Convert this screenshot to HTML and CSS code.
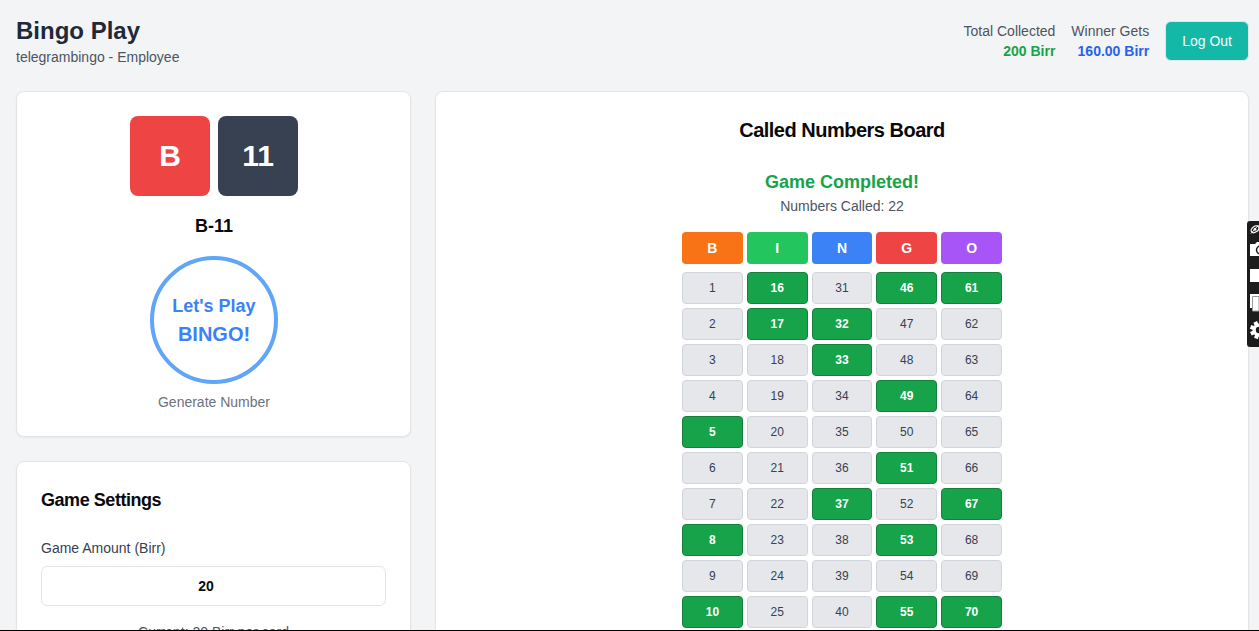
FILE: index.html
```
<!DOCTYPE html>
<html lang="en">
<head>
<meta charset="utf-8">
<title>Bingo Play</title>
<link rel="stylesheet" href="styles.css">
</head>
<body>
<div class="page">
  <header class="header">
    <div>
      <h1 class="title">Bingo Play</h1>
      <p class="subtitle">telegrambingo - Employee</p>
    </div>
    <div class="header-right">
      <div class="stat"><p>Total Collected</p><p class="stat-value green">200 Birr</p></div>
      <div class="stat"><p>Winner Gets</p><p class="stat-value blue">160.00 Birr</p></div>
      <button class="logout">Log Out</button>
    </div>
  </header>
  <main class="columns">
    <div class="left">
      <section class="card caller">
        <div class="tiles"><div class="tile letter">B</div><div class="tile number">11</div></div>
        <p class="current">B-11</p>
        <div class="circle"><span class="lets">Let's Play</span><span class="bingo">BINGO!</span></div>
        <p class="generate">Generate Number</p>
      </section>
      <section class="card settings">
        <h2 class="settings-title">Game Settings</h2>
        <label class="label">Game Amount (Birr)</label>
        <div class="amount">20</div>
        <p class="hint">Current: 20 Birr per card</p>
      </section>
    </div>
    <section class="card board-card">
      <h2 class="board-title">Called Numbers Board</h2>
      <p class="completed">Game Completed!</p>
      <p class="count">Numbers Called: 22</p>
      <div class="board heads">
        <div class="head b">B</div><div class="head i">I</div><div class="head n">N</div><div class="head g">G</div><div class="head o">O</div>
      </div>
      <div class="board" id="cells"></div>
    </section>
  </main>
</div>
<svg class="dock" width="12" height="126" viewBox="0 0 12 126">
  <path d="M3 0H12V126H3Q0 126 0 123V3Q0 0 3 0Z" fill="#1c1c1c"/>
  <ellipse cx="8" cy="8.300" rx="4.300" ry="2.800" transform="rotate(-35 8 8.300)" fill="none" stroke="#fff" stroke-width="1.200"/>
  <circle cx="8" cy="8.300" r="1.400" fill="#fff"/>
  <path d="M4 12.500L11.500 4" stroke="#fff" stroke-width="1"/>
  <path d="M3 23H8L10 21H12V35H3Z" fill="#fff"/>
  <circle cx="13.500" cy="29" r="4" fill="#fff" stroke="#1c1c1c" stroke-width="1.500"/>
  <path d="M3 48H12V61H3Z" fill="#fff"/>
  <path d="M3 73H12V87H3Z" fill="#fff"/>
  <path d="M12 75.500H5.500V90H12Z" fill="#fff" stroke="#999" stroke-width="1"/>
  <g fill="#fff" transform="translate(12 109)">
    <circle r="6.500"/>
    <path d="M-9-2H0V2H-9Z" transform="rotate(20)"/>
    <path d="M-9-2H0V2H-9Z" transform="rotate(65)"/>
    <path d="M-9-2H0V2H-9Z" transform="rotate(-25)"/>
    <path d="M-9-2H0V2H-9Z" transform="rotate(-70)"/>
    <circle r="3.200" fill="#1c1c1c"/>
  </g>
</svg>
<div class="edge"></div>
<script src="board.js"></script>
</body>
</html>
```
FILE: styles.css
```
* { box-sizing: border-box; margin: 0; padding: 0; }
html { overflow: hidden; }
body { height: 631px; overflow: hidden; position: relative; background: #f3f4f6; font-family: "Liberation Sans", Arial, sans-serif; font-size: 14px; line-height: 20px; color: #09090b; }
.page { width: 1265px; height: 631px; overflow: hidden; padding: 15px 16px 0; }
.header { display: flex; justify-content: space-between; align-items: center; margin-bottom: 24px; }
.title { font-size: 24px; line-height: 32px; font-weight: 700; color: #1f2937; }
.subtitle, .stat, .count, .hint { color: #4b5563; }
.header-right { display: flex; align-items: center; gap: 16px; }
.stat { text-align: right; }
.stat-value { font-weight: 700; }
.green { color: #16a34a; }
.blue { color: #2563eb; }
.logout { font: inherit; height: 40px; padding: 0 16px; border: 1px solid #e4e4e7; border-radius: 6px; background: #14b8a6; color: #fafafa; }
.columns { display: grid; grid-template-columns: calc((100% - 48px) / 3) 1fr; gap: 24px; }
.left { display: flex; flex-direction: column; gap: 24px; }
.card { background: #fff; border: 1px solid #e4e4e7; border-radius: 8px; padding: 24px; box-shadow: 0 1px 2px rgba(0, 0, 0, .05); }
.caller { display: flex; flex-direction: column; align-items: center; padding-left: 25px; }
.tiles { display: flex; gap: 8px; margin-bottom: 16px; }
.tile { width: 80px; height: 80px; border-radius: 8px; display: flex; align-items: center; justify-content: center; color: #fff; font-size: 30px; font-weight: 700; }
.letter { background: #ef4444; }
.number { background: #374151; }
.current { font-size: 18px; line-height: 28px; font-weight: 700; margin-bottom: 16px; }
.circle { width: 128px; height: 128px; border: 4px solid #60a5fa; border-radius: 50%; display: flex; flex-direction: column; align-items: center; justify-content: center; color: #3b82f6; font-weight: 700; line-height: 28px; margin-bottom: 8px; }
.lets { font-size: 18px; }
.bingo { font-size: 20px; }
.generate { color: #6b7280; }
.settings { height: 300px; }
.settings-title { font-size: 18px; line-height: 28px; font-weight: 700; letter-spacing: -.025em; margin-bottom: 24px; }
.label { display: block; color: #374151; margin-bottom: 8px; }
.amount { height: 40px; border: 1px solid #e4e4e7; border-radius: 6px; display: flex; align-items: center; justify-content: center; padding-right: 15px; font-weight: 700; margin-bottom: 16px; }
.hint { text-align: center; }
.board-card { text-align: center; }
.board-title { font-size: 20px; line-height: 28px; font-weight: 700; letter-spacing: -.025em; margin-bottom: 24px; }
.completed { font-size: 18px; line-height: 28px; font-weight: 700; color: #16a34a; }
.count { margin-bottom: 16px; }
.board { display: grid; grid-template-columns: repeat(5, 1fr); gap: 4px; width: 320px; margin: 0 auto; }
.heads { margin-bottom: 8px; }
.head { height: 32px; line-height: 32px; border-radius: 4px; color: #fff; font-weight: 700; }
.b { background: #f97316; }
.i { background: #22c55e; }
.n { background: #3b82f6; }
.g { background: #ef4444; }
.o { background: #a855f7; }
.cell { height: 32px; line-height: 30px; border: 1px solid #d1d5db; border-radius: 4px; background: #e5e7eb; color: #374151; font-size: 12px; }
.called { background: #16a34a; border-color: #15803d; color: #fff; font-weight: 700; }
.dock { position: absolute; left: 1247px; top: 221px; }
.edge { position: absolute; left: 0; right: 0; top: 630px; height: 1px; background: #000; }
```
FILE: board.js
```
const ROWS = 10;
const called = new Set([5, 8, 10, 16, 17, 32, 33, 37, 46, 49, 51, 53, 55, 61, 67, 70]);
const cells = document.getElementById("cells");
for (let row = 1; row <= ROWS; row++) {
  for (let col = 0; col < 5; col++) {
    const n = row + col * 15;
    const cell = document.createElement("div");
    cell.className = called.has(n) ? "cell called" : "cell";
    cell.textContent = n;
    cells.append(cell);
  }
}
```
